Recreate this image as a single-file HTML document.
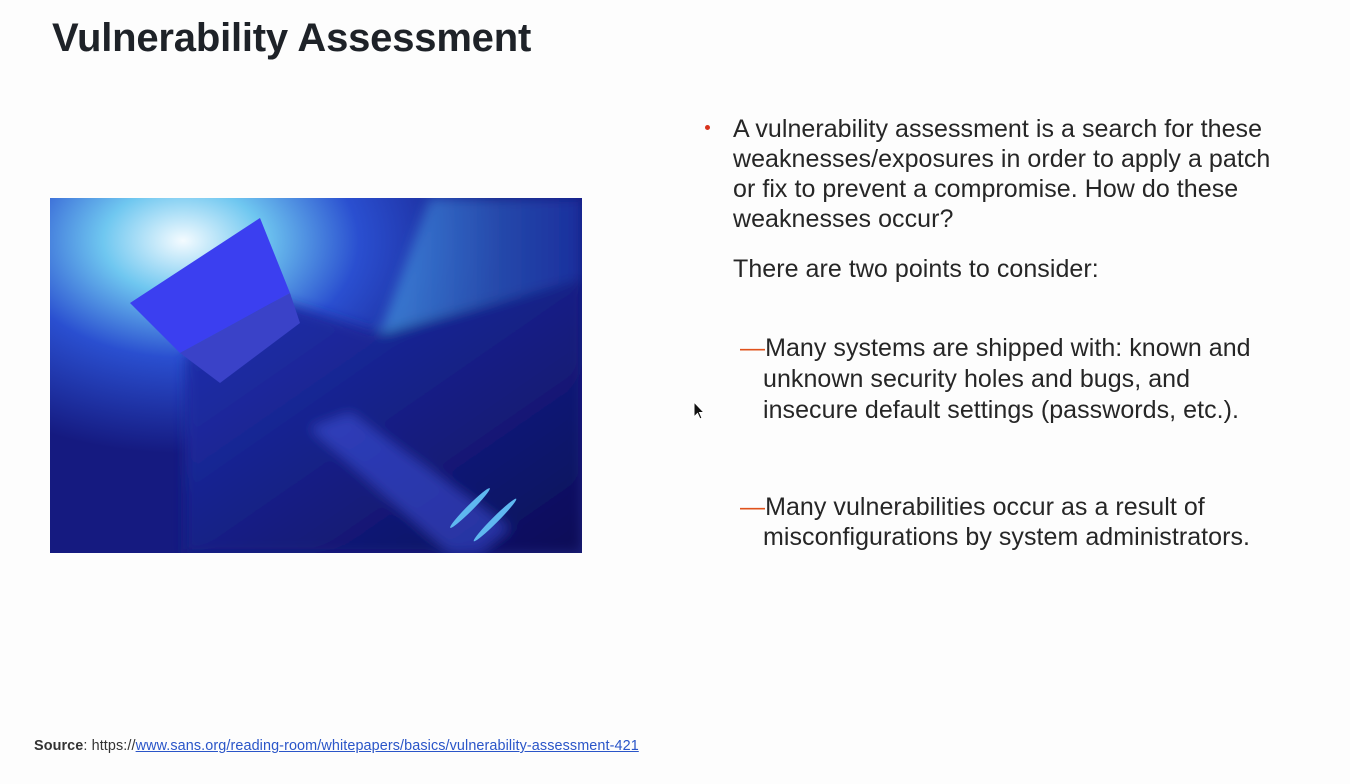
<!DOCTYPE html>
<html><head><meta charset="utf-8"><style>
body{margin:0;width:1350px;height:784px;background:#fdfdfd;position:relative;overflow:hidden;font-family:"Liberation Sans",Arial,sans-serif;color:#262626}
.l{position:absolute;white-space:nowrap;font-size:25px;letter-spacing:0.05px;line-height:30px}
h1{position:absolute;left:52px;top:14px;margin:0;font-size:40px;font-weight:bold;color:#1e2228;letter-spacing:-0.2px;line-height:48px}
.d{color:#e0521c}
</style></head><body>
<h1>Vulnerability Assessment</h1>
<svg style="position:absolute;left:50px;top:198px" width="532" height="355" viewBox="0 0 532 355">
<defs>
<radialGradient id="g1" cx="0.25" cy="0.12" r="0.6"><stop offset="0" stop-color="#f4fbff"/><stop offset="0.25" stop-color="#6fc7f0"/><stop offset="0.55" stop-color="#2a4fd0"/><stop offset="1" stop-color="#151a80"/></radialGradient>
<linearGradient id="g2" x1="0" y1="0" x2="1" y2="1"><stop offset="0" stop-color="#2234b8"/><stop offset="1" stop-color="#0a0c55"/></linearGradient>
<linearGradient id="g3" x1="0" y1="0" x2="1" y2="0"><stop offset="0" stop-color="#4aa8e8"/><stop offset="1" stop-color="#1d3bb0"/></linearGradient>
<filter id="b"><feGaussianBlur stdDeviation="6"/></filter>
</defs>
<rect width="532" height="355" fill="url(#g1)"/>
<g filter="url(#b)">
<polygon points="380,0 532,0 532,80 420,160 330,135" fill="url(#g3)" opacity="0.6"/>
<polygon points="135,160 220,100 330,135 532,80 532,355 135,355" fill="url(#g2)"/>
<polygon points="260,230 300,215 460,330 430,355 400,355" fill="#4a5ef0" opacity="0.45"/>
</g>
<polygon points="80,105 210,20 240,95 130,155" fill="#3b3ff0"/>
<polygon points="130,155 240,95 250,125 170,185" fill="#3a42c8"/>
<ellipse cx="420" cy="310" rx="3" ry="28" transform="rotate(45 420 310)" fill="#5fb8f0"/>
<ellipse cx="445" cy="322" rx="3" ry="30" transform="rotate(45 445 322)" fill="#5fb8f0"/>
</svg>
<div style="position:absolute;left:705px;top:125px;width:5px;height:5px;border-radius:50%;background:#d8331c"></div>
<div class="l" style="left:733px;top:114px">A vulnerability assessment is a search for these</div>
<div class="l" style="left:733px;top:144px">weaknesses/exposures in order to apply a patch</div>
<div class="l" style="left:733px;top:174px">or fix to prevent a compromise. How do these</div>
<div class="l" style="left:733px;top:204px">weaknesses occur?</div>
<div class="l" style="left:733px;top:254px">There are two points to consider:</div>
<div class="l" style="left:740px;top:333px"><span class="d">—</span>Many systems are shipped with: known and</div>
<div class="l" style="left:763px;top:364px">unknown security holes and bugs, and</div>
<div class="l" style="left:763px;top:395px">insecure default settings (passwords, etc.).</div>
<div class="l" style="left:740px;top:492px"><span class="d">—</span>Many vulnerabilities occur as a result of</div>
<div class="l" style="left:763px;top:522px">misconfigurations by system administrators.</div>
<div style="position:absolute;left:34px;top:738px;font-size:14.4px;letter-spacing:0.1px;color:#333;white-space:nowrap"><b>Source</b>: https://<span style="color:#2a55c8;text-decoration:underline">www.sans.org/reading-room/whitepapers/basics/vulnerability-assessment-421</span></div>
<svg style="position:absolute;left:693px;top:401px" width="12" height="20" viewBox="0 0 12 20"><path d="M1 1 L1 16 L4.5 12.5 L7 18 L9 17 L6.5 11.5 L11 11.5 Z" fill="#111" stroke="#fff" stroke-width="1"/></svg>
</body></html>
